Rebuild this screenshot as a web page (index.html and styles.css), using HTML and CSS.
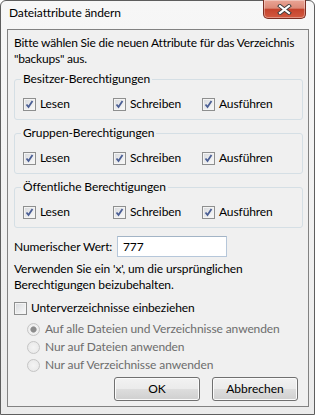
FILE: index.html
```html
<!DOCTYPE html>
<html lang="de">
<head>
    <meta charset="UTF-8">
    <title>Dateiattribute ändern</title>
    <link rel="stylesheet" href="styles.css">
</head>
<body>
    <div class="window">
        <!-- Title Bar -->
        <div class="titlebar">
            <span class="title">Dateiattribute ändern</span>
            <div class="close">
                <svg width="15" height="11" viewBox="0 0 15 11">
                    <path d="M3 2 L12 9 M12 2 L3 9" stroke="#3b3b3b" stroke-width="4" stroke-linecap="square"/>
                    <path d="M3 2 L12 9 M12 2 L3 9" stroke="#fff" stroke-width="2.2" stroke-linecap="square"/>
                </svg>
            </div>
        </div>

        <!-- Client Area -->
        <div class="client">
            <p class="intro">Bitte wählen Sie die neuen Attribute für das Verzeichnis<br>"backups" aus.</p>

            <fieldset class="group">
                <legend>Besitzer-Berechtigungen</legend>
                <div class="row">
                    <label class="check"><span class="cb"><svg width="11" height="11" viewBox="0 0 11 11"><path d="M2.5 5.5 L4.5 8 L8.5 2" fill="none" stroke="#4b5f95" stroke-width="1.8"/></svg></span>Lesen</label>
                    <label class="check"><span class="cb"><svg width="11" height="11" viewBox="0 0 11 11"><path d="M2.5 5.5 L4.5 8 L8.5 2" fill="none" stroke="#4b5f95" stroke-width="1.8"/></svg></span>Schreiben</label>
                    <label class="check"><span class="cb"><svg width="11" height="11" viewBox="0 0 11 11"><path d="M2.5 5.5 L4.5 8 L8.5 2" fill="none" stroke="#4b5f95" stroke-width="1.8"/></svg></span>Ausführen</label>
                </div>
            </fieldset>

            <fieldset class="group">
                <legend>Gruppen-Berechtigungen</legend>
                <div class="row">
                    <label class="check"><span class="cb"><svg width="11" height="11" viewBox="0 0 11 11"><path d="M2.5 5.5 L4.5 8 L8.5 2" fill="none" stroke="#4b5f95" stroke-width="1.8"/></svg></span>Lesen</label>
                    <label class="check"><span class="cb"><svg width="11" height="11" viewBox="0 0 11 11"><path d="M2.5 5.5 L4.5 8 L8.5 2" fill="none" stroke="#4b5f95" stroke-width="1.8"/></svg></span>Schreiben</label>
                    <label class="check"><span class="cb"><svg width="11" height="11" viewBox="0 0 11 11"><path d="M2.5 5.5 L4.5 8 L8.5 2" fill="none" stroke="#4b5f95" stroke-width="1.8"/></svg></span>Ausführen</label>
                </div>
            </fieldset>

            <fieldset class="group">
                <legend>Öffentliche Berechtigungen</legend>
                <div class="row">
                    <label class="check"><span class="cb"><svg width="11" height="11" viewBox="0 0 11 11"><path d="M2.5 5.5 L4.5 8 L8.5 2" fill="none" stroke="#4b5f95" stroke-width="1.8"/></svg></span>Lesen</label>
                    <label class="check"><span class="cb"><svg width="11" height="11" viewBox="0 0 11 11"><path d="M2.5 5.5 L4.5 8 L8.5 2" fill="none" stroke="#4b5f95" stroke-width="1.8"/></svg></span>Schreiben</label>
                    <label class="check"><span class="cb"><svg width="11" height="11" viewBox="0 0 11 11"><path d="M2.5 5.5 L4.5 8 L8.5 2" fill="none" stroke="#4b5f95" stroke-width="1.8"/></svg></span>Ausführen</label>
                </div>
            </fieldset>

            <!-- Numeric value -->
            <div class="numeric">
                <span class="num-label">Numerischer Wert:</span>
                <div class="input">777</div>
            </div>
            <p class="hint">Verwenden Sie ein 'x', um die ursprünglichen<br>Berechtigungen beizubehalten.</p>

            <label class="check subdirs"><span class="cb"></span>Unterverzeichnisse einbeziehen</label>

            <div class="radios">
                <div class="radio"><span class="rb selected"></span>Auf alle Dateien und Verzeichnisse anwenden</div>
                <div class="radio"><span class="rb"></span>Nur auf Dateien anwenden</div>
                <div class="radio"><span class="rb"></span>Nur auf Verzeichnisse anwenden</div>
            </div>

            <!-- Buttons -->
            <div class="buttons">
                <button class="btn">OK</button>
                <button class="btn">Abbrechen</button>
            </div>
        </div>
    </div>
</body>
</html>
```

FILE: styles.css
```css
/* General Styles */
* {
    box-sizing: border-box;
}

body {
    margin: 0;
    font-family: 'Lato', 'Open Sans', sans-serif;
    font-size: 12px;
    line-height: 16px;
    letter-spacing: -0.1px;
    color: #000;
    background: #fff;
}

p {
    margin: 0;
}

/* Window Frame */
.window {
    width: 315px;
    height: 415px;
    border: 1px solid #5e5e5e;
    border-radius: 6px 6px 0 0;
    background: linear-gradient(#f7f7f7, #ebebeb);
    padding: 0 5px 7px 6px;
    display: flex;
    flex-direction: column;
}

.titlebar {
    height: 28px;
    display: flex;
    align-items: flex-start;
}

.title {
    padding: 4px 0 0 2px;
}

.close {
    margin: -1px 3px 0 auto;
    width: 43px;
    height: 19px;
    border: 1px solid #7b2e22;
    border-top: none;
    border-radius: 0 0 5px 5px;
    background: linear-gradient(#eaa595 0%, #dc8a78 45%, #c5432c 52%, #d35a40 100%);
    box-shadow: inset 0 0 0 1px rgba(255, 255, 255, 0.35);
    display: flex;
    align-items: center;
    justify-content: center;
}

/* Client Area */
.client {
    flex: 1;
    border: 1px solid #828282;
    background: #f0f0f0;
    padding: 5px 5px 5px 6px;
    display: flex;
    flex-direction: column;
}

.intro {
    white-space: nowrap;
    letter-spacing: -0.2px;
}

/* Group Boxes */
.group {
    margin: 4px 0 0;
    min-width: 0;
    padding: 0 0 7px 8px;
    border: 1px solid #d5dfe5;
    border-radius: 3px;
}

.group + .group {
    margin-top: 5px;
}

.group legend {
    padding: 0 2px;
    margin-left: -2px;
}

.row {
    margin-top: 9px;
    display: grid;
    grid-template-columns: 90px 89px auto;
}

/* Checkboxes */
.check {
    display: flex;
    align-items: flex-start;
    gap: 4px;
}

.cb {
    width: 13px;
    height: 13px;
    margin-top: 2px;
    border: 1px solid #8e8f8f;
    background: linear-gradient(135deg, #d7d9dc, #fbfbfb);
    box-shadow: inset 0 0 0 1px #f4f4f4;
    display: flex;
    align-items: center;
    justify-content: center;
}

/* Numeric value */
.numeric {
    margin-top: 8px;
    display: flex;
    align-items: center;
}

.num-label {
    width: 103px;
    white-space: nowrap;
}

.input {
    width: 110px;
    height: 21px;
    padding: 2px 5px;
    background: #fff;
    border: 1px solid #b6c7da;
    border-top-color: #a3b4c6;
}

.hint {
    margin-top: 4px;
}

.subdirs {
    margin-top: 7px;
}

/* Radio Buttons (disabled) */
.radios {
    margin-top: 4px;
    padding-left: 13px;
    color: #6d6d6d;
}

.radio {
    height: 18px;
    display: flex;
    align-items: center;
    gap: 5px;
}

.rb {
    width: 13px;
    height: 13px;
    border-radius: 50%;
    border: 1px solid #c5c5c5;
    background: radial-gradient(circle at 50% 50%, #f4f4f4 0%, #e6e6e6 100%);
}

.rb.selected {
    background: radial-gradient(circle, #8c8c8c 0 2.5px, #b4b4b4 3px, #f2f2f2 3.5px, #e6e6e6 100%);
}

/* Buttons */
.buttons {
    margin-top: auto;
    display: flex;
    justify-content: flex-end;
    gap: 12px;
    padding-right: 5px;
}

.btn {
    width: 86px;
    height: 24px;
    font: inherit;
    color: #000;
    border: 1px solid #707070;
    border-radius: 3px;
    background: linear-gradient(#f2f2f2 0%, #ebebeb 48%, #dddddd 52%, #cfcfcf 100%);
    box-shadow: inset 0 0 0 1px #fbfbfb;
}
```
